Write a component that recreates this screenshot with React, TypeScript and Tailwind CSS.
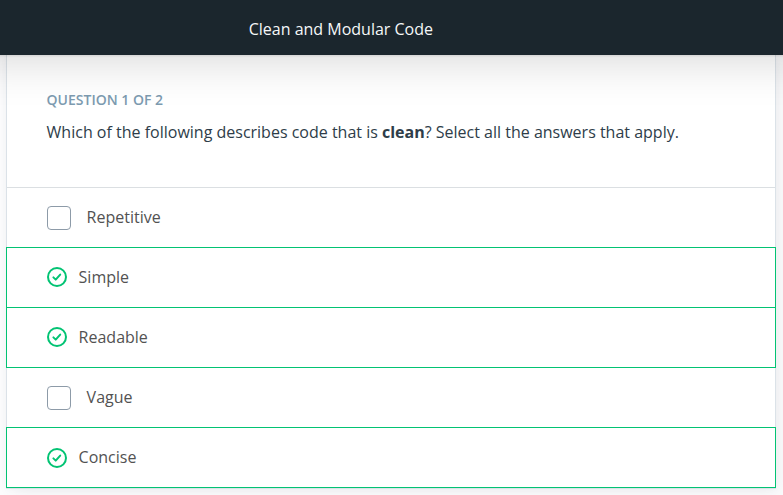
type Answer = { label: string; correct: boolean };

const answers: Answer[] = [
  { label: 'Repetitive', correct: false },
  { label: 'Simple', correct: true },
  { label: 'Readable', correct: true },
  { label: 'Vague', correct: false },
  { label: 'Concise', correct: true },
];

function CheckIcon() {
  return (
    <svg className="h-5 w-5 shrink-0 group-last:mt-0.5" viewBox="0 0 20 20" fill="none" stroke="#02c373">
      <circle cx="10" cy="10" r="9" strokeWidth="2" />
      <path d="M6.4 10.4l2.3 2.2 4.5-5" strokeWidth="2" strokeLinecap="round" strokeLinejoin="round" />
    </svg>
  );
}

function AnswerRow({ label, correct }: Answer) {
  if (correct) {
    return (
      <li className="group -mx-px -mt-px flex h-[61px] items-center gap-[11.6px] border border-[#02c373] pb-0.5 pl-10">
        <CheckIcon />
        <span>{label}</span>
      </li>
    );
  }
  return (
    <li className="mb-px flex h-[59px] items-center gap-[15.6px] pb-0.5 pl-10">
      <span className="mt-0.5 h-6 w-6 shrink-0 rounded-[4px] border border-[#8d9ba8] bg-white" />
      <span>{label}</span>
    </li>
  );
}

export default function App() {
  return (
    <div className="flex h-[495px] w-full flex-col overflow-hidden bg-[#fdfdfe] font-['Open_Sans','Noto_Sans',sans-serif] text-base">
      <header className="relative z-10 -mx-12 h-[55px] shrink-0 bg-[#1b262d] pt-[17px] pl-[296.7px] leading-6 text-[#f5f7f8] shadow-[0_1px_2px_rgba(0,0,0,0.1),0_2px_50px_rgba(0,0,0,0.18)]">
        <h1>Clean and Modular Code</h1>
      </header>
      <main className="mr-2 ml-[7px] h-[433px] bg-white shadow-[0_0_0_1px_#dbe2e8,5px_5px_20px_rgba(46,61,73,0.08),0_0_8px_rgba(46,61,73,0.04)]">
        <section className="h-[133px] border-b border-[#dbdfe2] pt-[35px] pl-[39.6px]">
          <h2 className="text-sm leading-5 font-semibold text-[#7d9bb0]">QUESTION 1 OF 2</h2>
          <p className="mt-2.5 leading-6 text-[#2e3d49]">
            Which of the following describes code that is <strong>clean</strong>? Select all the answers that apply.
          </p>
        </section>
        <ul className="text-[#525252]">
          {answers.map((answer) => (
            <AnswerRow key={answer.label} {...answer} />
          ))}
        </ul>
      </main>
    </div>
  );
}
